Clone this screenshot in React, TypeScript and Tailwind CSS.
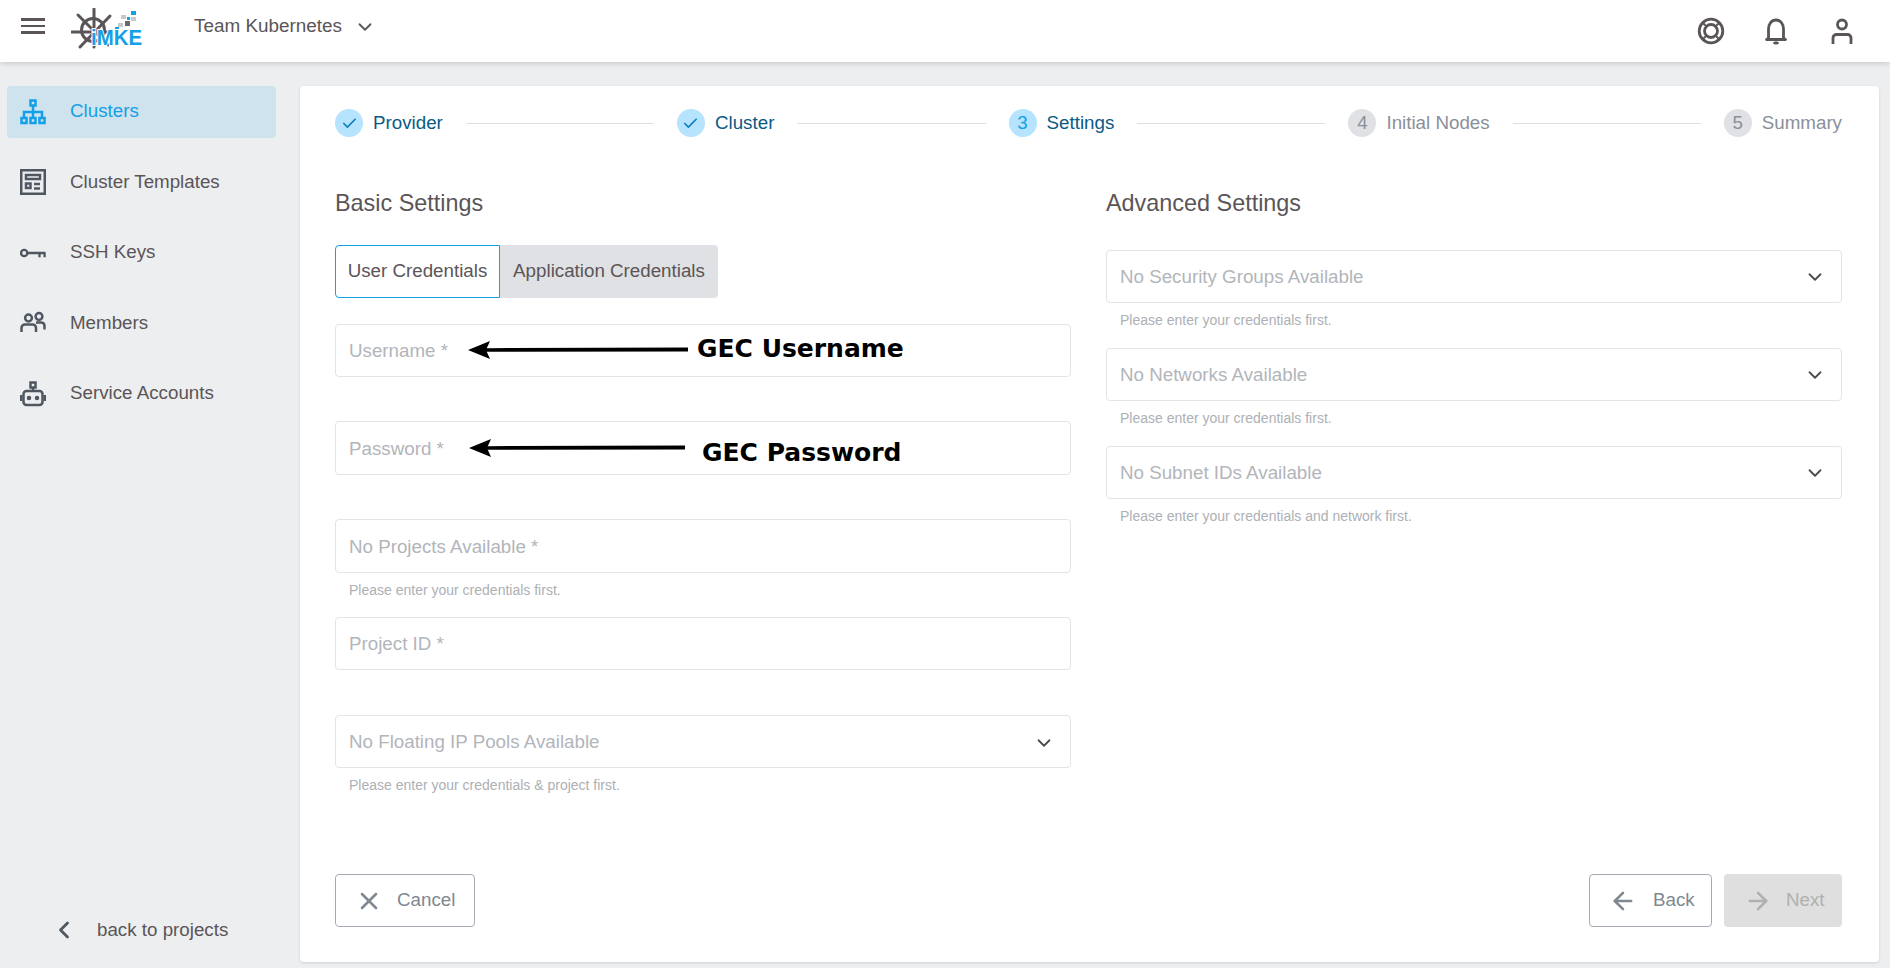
import { Check, ChevronDown, ChevronLeft, ArrowLeft, ArrowRight, X } from 'lucide-react';
import type { ReactNode } from 'react';

const FONT = "font-['Liberation_Sans',sans-serif]";

const Logo = () => (
  <svg width="76" height="44" viewBox="0 0 76 44" className="shrink-0">
    <g stroke="#5b5557" strokeWidth="3" fill="none" strokeLinecap="round">
      <circle cx="22" cy="22" r="11.500" />
      <path d="M23 1v38" />
      <path d="M1 24h38" />
      <path d="M7 7l30 30M39 8L9 39" />
    </g>
    <rect x="44" y="19" width="4" height="4" fill="#12a0e8" />
    <rect x="47" y="15" width="5" height="4" fill="#c7c9cb" />
    <rect x="50" y="7" width="5" height="4" fill="#c7c9cb" />
    <rect x="54" y="13" width="5" height="5" fill="#6a6a6a" />
    <rect x="56" y="9" width="3" height="3" fill="#12a0e8" />
    <rect x="60" y="9" width="5" height="4" fill="#c7c9cb" />
    <rect x="60" y="3" width="5" height="4" fill="#12a0e8" />
    <text x="20" y="37" fill="#12a0e8" fontFamily="Liberation Sans, sans-serif" fontWeight="700" fontSize="22" stroke="white" strokeWidth="2" paintOrder="stroke" textLength="51" lengthAdjust="spacingAndGlyphs">iMKE</text>
  </svg>
);

const ClusterIcon = () => (
  <svg width="26" height="26" viewBox="0 0 26 26" fill="none" stroke="currentColor" strokeWidth="2.500">
    <rect x="10.500" y="1.500" width="5" height="5" />
    <rect x="1.500" y="19" width="5" height="5" />
    <rect x="10.500" y="19" width="5" height="5" />
    <rect x="19.500" y="19" width="5" height="5" />
    <path d="M13 6.500V19M4 19v-6h18v6" />
  </svg>
);

const TemplateIcon = () => (
  <svg width="26" height="26" viewBox="0 0 26 26" fill="none" stroke="currentColor" strokeWidth="2.500">
    <rect x="1.250" y="1.250" width="23.500" height="23.500" />
    <rect x="6" y="6" width="14" height="4" />
    <rect x="6" y="14.500" width="4.500" height="4.500" />
    <path d="M14 15h6M14 19.500h6" />
  </svg>
);

const KeyIcon = () => (
  <svg width="28" height="26" viewBox="0 0 28 26" fill="none" stroke="currentColor" strokeWidth="2.500">
    <circle cx="4.500" cy="13" r="3.400" />
    <path d="M8 13h19.500M21 13v4.500M26.500 13v4.500" />
  </svg>
);

const MembersIcon = () => (
  <svg width="26" height="26" viewBox="0 0 26 26" fill="none" stroke="currentColor" strokeWidth="2.500">
    <circle cx="8.500" cy="8" r="3.400" />
    <circle cx="19" cy="6.500" r="3.400" />
    <path d="M1.500 22v-4c0-2 1.500-3.500 3.500-3.500h7.500c2 0 3.500 1.500 3.500 3.500v4" />
    <path d="M16 12.500h5c2.500 0 3.500 1 3.500 3.500v3.500" />
  </svg>
);

const RobotIcon = () => (
  <svg width="26" height="26" viewBox="0 0 26 26" fill="none" stroke="currentColor" strokeWidth="2.500">
    <rect x="10.500" y="1.500" width="5" height="5" />
    <path d="M13 6.500V10" />
    <rect x="3.500" y="10" width="19" height="14" rx="3" />
    <path d="M1.200 14v6M24.800 14v6" />
    <circle cx="9" cy="17" r="1" fill="currentColor" />
    <circle cx="17" cy="17" r="1" fill="currentColor" />
  </svg>
);

const LifebuoyIcon = () => (
  <svg width="28" height="28" viewBox="0 0 28 28" fill="none" stroke="#5b5557" strokeWidth="2.800">
    <circle cx="14" cy="14" r="11.800" />
    <circle cx="14" cy="14" r="6.500" />
    <path d="M5.700 5.700l3.700 3.700M22.300 5.700l-3.700 3.700M5.700 22.300l3.700-3.700M22.300 22.300l-3.700-3.700" strokeWidth="2" />
  </svg>
);

const BellIcon = () => (
  <svg width="24" height="28" viewBox="0 0 24 28" fill="none" stroke="#5b5557" strokeWidth="2.800" strokeLinejoin="round">
    <path d="M4.500 21V12c0-5 3-9 7.500-9s7.500 4 7.500 9v9l2 1.500H2.500z" />
    <path d="M10 25c.4.800 1.100 1.200 2 1.200s1.600-.4 2-1.200" />
  </svg>
);

const UserIcon = () => (
  <svg width="24" height="28" viewBox="0 0 24 28" fill="none" stroke="#5b5557" strokeWidth="2.800">
    <circle cx="12" cy="7.500" r="4.500" />
    <path d="M3 27v-6c0-2 1.500-3.500 3.500-3.500h11c2 0 3.500 1.500 3.500 3.500v6" />
  </svg>
);

const NAV = [
  { label: 'Clusters', icon: ClusterIcon, active: true },
  { label: 'Cluster Templates', icon: TemplateIcon },
  { label: 'SSH Keys', icon: KeyIcon },
  { label: 'Members', icon: MembersIcon },
  { label: 'Service Accounts', icon: RobotIcon },
];

const STEPS = [
  { n: 1, label: 'Provider', state: 'done' },
  { n: 2, label: 'Cluster', state: 'done' },
  { n: 3, label: 'Settings', state: 'current' },
  { n: 4, label: 'Initial Nodes', state: 'todo' },
  { n: 5, label: 'Summary', state: 'todo' },
];

const Arrow = ({ width }: { width: number }) => (
  <svg width={width} height="20" viewBox={`0 0 ${width} 20`} className="block">
    <path d={`M18 8.200L${width} 7.400V11.400L18 11.800z`} fill="black" />
    <path d="M0 10L22 1L18 10L22 19z" fill="black" />
  </svg>
);

const Note = ({ children }: { children: ReactNode }) => (
  <span className="absolute font-['DejaVu_Sans',sans-serif] font-bold text-[25px] leading-[30px] text-black whitespace-nowrap">
    {children}
  </span>
);

function Field({ label, hint, select, low, tall, children }: { label: string; hint?: string; select?: boolean; low?: boolean; tall?: boolean; children?: ReactNode }) {
  return (
    <div className="h-[98px]">
      <div className={`relative rounded border border-[#e2e4e6] flex items-center justify-between pl-[13px] pr-[15px] ${tall ? 'h-[54px]' : 'h-[53px]'} ${low ? 'pt-[2px]' : 'pt-[1px]'}`}>
        <span className="text-[18.750px] text-[#b2b5ba]">{label}</span>
        {select && <ChevronDown className="w-[22px] h-[22px] text-[#4f4a4c]" strokeWidth={2} />}
        {children}
      </div>
      {hint && <p className="mt-[7px] pl-[14px] text-[14px] leading-[20px] text-[#adb0b5]">{hint}</p>}
    </div>
  );
}

export default function App() {
  return (
    <div className={`h-screen w-full flex flex-col bg-[#eceef0] overflow-hidden ${FONT}`}>
      <header className="relative z-10 h-[62px] shrink-0 bg-white shadow-[0_1px_6px_rgba(0,0,0,0.18)] flex items-center pl-[21px] pr-[36px] pb-[1px]">
        <div className="flex flex-col gap-[4px] w-[24px] -mt-[9px]">
          <span className="h-[2.500px] bg-[#5b5557]" />
          <span className="h-[2.500px] bg-[#5b5557]" />
          <span className="h-[2.500px] bg-[#5b5557]" />
        </div>
        <div className="ml-[26px] -mt-[2px]"><Logo /></div>
        <span className="ml-[47px] -mt-[9px] text-[18.900px] text-[#5b5557]">Team Kubernetes</span>
        <ChevronDown className="ml-[12px] -mt-[7px] w-[22px] h-[22px] text-[#5b5557]" strokeWidth={2} />
        <div className="ml-auto flex items-center">
          <LifebuoyIcon />
          <span className="ml-[39px]"><BellIcon /></span>
          <span className="ml-[42px]"><UserIcon /></span>
        </div>
      </header>

      <div className="flex-1 flex min-h-0">
        <aside className="w-[300px] shrink-0 flex flex-col pt-[24px] pl-[7px] pr-[24px] pb-[24px]">
          <nav className="flex flex-col gap-[18.400px]">
            {NAV.map(({ label, icon: Icon, active }) => (
              <div
                key={label}
                className={`h-[52px] rounded flex items-center pl-[13px] gap-[24px] ${active ? 'bg-[#cfe3ee] text-[#12a0e8]' : 'text-[#5b5557]'}`}
              >
                <span className={`w-[26px] flex justify-center ${active ? '' : 'text-[#4f5860]'}`}><Icon /></span>
                <span className="text-[18.750px] pb-[1px]">{label}</span>
              </div>
            ))}
          </nav>
          <div className="mt-auto flex items-center pl-[43px] text-[#5b5557]">
            <ChevronLeft className="w-[28px] h-[28px] text-[#4f5860]" strokeWidth={2.400} />
            <span className="ml-[19px] text-[18.750px]">back to projects</span>
          </div>
        </aside>

        <main className="flex-1 mt-[24px] mb-[6px] mr-[11px] bg-white rounded shadow-[0_1px_3px_rgba(0,0,0,0.12)] pl-[35px] pr-[37px] pt-[23px] pb-[35px] flex flex-col">
          <div className="flex items-center h-[28px]">
            {STEPS.map((s, i) => (
              <div key={s.n} className={`flex items-center ${i < STEPS.length - 1 ? 'flex-auto' : ''}`}>
                <span className={`w-[28px] h-[28px] rounded-full flex items-center justify-center text-[18.750px] ${s.state === 'todo' ? 'bg-[#dfe1e4] text-[#8a9099]' : 'bg-[#b6e3fd] text-[#12a0e8]'}`}>
                  {s.state === 'done' ? <Check className="w-[17px] h-[17px] text-[#0e7fc2]" strokeWidth={2.400} /> : s.n}
                </span>
                <span className={`ml-[10px] text-[18.750px] whitespace-nowrap ${s.state === 'todo' ? 'text-[#8a9099]' : 'text-[#0b5a85]'}`}>{s.label}</span>
                {i < STEPS.length - 1 && <span className="flex-1 h-[1px] mx-[23px] bg-[#dcdee0]" />}
              </div>
            ))}
          </div>

          <div className="mt-[52px] flex-1 grid grid-cols-2 gap-[35px]">
            <section>
              <h2 className="text-[23.400px] leading-[28px] text-[#5b5557]">Basic Settings</h2>
              <div className="mt-[28px] flex h-[53px] w-fit text-[18.750px] text-[#5b5557]">
                <span className="w-[165px] flex items-center justify-center rounded-l border border-[#12a0e8]">User Credentials</span>
                <span className="w-[218px] flex items-center justify-center rounded-r bg-[#dfe1e4]">Application Credentials</span>
              </div>
              <div className="mt-[26px]">
                <Field label="Username *">
                  <span className="absolute left-[132px] top-[15px]"><Arrow width={220} /></span>
                  <span className="absolute left-[361px] top-[9px]"><Note>GEC Username</Note></span>
                </Field>
                <div className="-mt-[1px]">
                  <Field label="Password *" low tall>
                    <span className="absolute left-[133px] top-[16px]"><Arrow width={216} /></span>
                    <span className="absolute left-[366px] top-[16px]"><Note>GEC Password</Note></span>
                  </Field>
                </div>
                <Field label="No Projects Available *" hint="Please enter your credentials first." low tall />
                <Field label="Project ID *" low />
                <Field label="No Floating IP Pools Available" hint="Please enter your credentials & project first." select low />
              </div>
            </section>
            <section>
              <h2 className="text-[23.400px] leading-[28px] text-[#5b5557]">Advanced Settings</h2>
              <div className="mt-[33px]">
                <Field label="No Security Groups Available" hint="Please enter your credentials first." select />
                <Field label="No Networks Available" hint="Please enter your credentials first." select />
                <Field label="No Subnet IDs Available" hint="Please enter your credentials and network first." select />
              </div>
            </section>
          </div>

          <div className="flex items-center justify-between">
            <button className="h-[53px] w-[140px] rounded border border-[#a5abb2] flex items-center pl-[19px] text-[#808891] text-[18.750px]">
              <X className="w-[28px] h-[28px]" strokeWidth={2.200} />
              <span className="ml-[14px]">Cancel</span>
            </button>
            <div className="flex gap-[12px]">
              <button className="h-[53px] w-[123px] rounded border border-[#a5abb2] flex items-center pl-[19px] text-[#808891] text-[18.750px]">
                <ArrowLeft className="w-[28px] h-[28px]" strokeWidth={2.200} />
                <span className="ml-[16px]">Back</span>
              </button>
              <button className="h-[53px] w-[118px] rounded bg-[#dfdfdf] flex items-center pl-[20px] text-[#b0b0b0] text-[18.750px]">
                <ArrowRight className="w-[28px] h-[28px]" strokeWidth={2.200} />
                <span className="ml-[14px]">Next</span>
              </button>
            </div>
          </div>
        </main>
      </div>
    </div>
  );
}
